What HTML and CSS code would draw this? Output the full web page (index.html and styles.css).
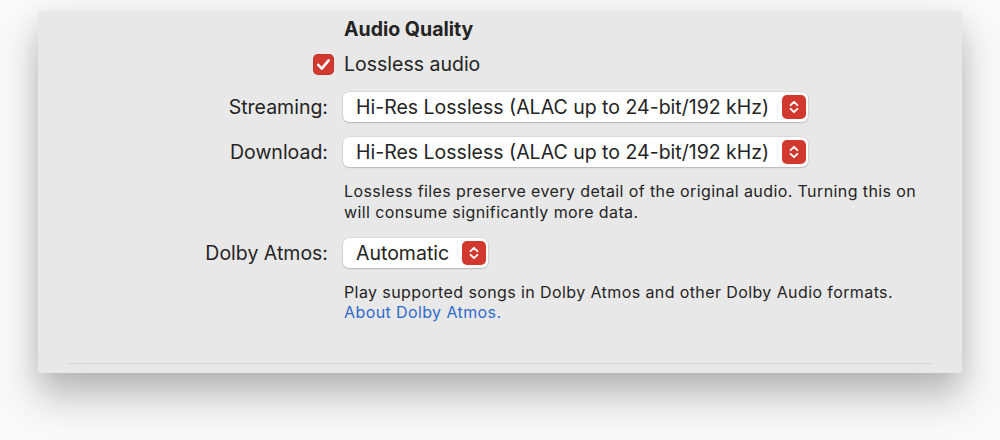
FILE: index.html
```html
<!DOCTYPE html>
<html lang="en">
<head>
<meta charset="utf-8">
<title>Audio Quality</title>
<link rel="stylesheet" href="styles.css">
</head>
<body>
<div class="window">
  <div class="form">
    <div class="cell"></div>
    <div class="heading">Audio Quality</div>

    <div class="cell check-cell">
      <span class="checkbox">
        <svg width="21" height="21" viewBox="0 0 21 21"><path d="M5.2 10.8 L8.8 14.6 L15.6 6.4" fill="none" stroke="#fff" stroke-width="2.6" stroke-linecap="round" stroke-linejoin="round"/></svg>
      </span>
    </div>
    <div class="check-label">Lossless audio</div>

    <div class="label row-stream">Streaming:</div>
    <div class="popup row-stream"><span class="popup-text">Hi-Res Lossless (ALAC up to 24-bit/192 kHz)</span><span class="stepper"><svg width="24" height="24" viewBox="0 0 24 24"><path d="M8.6 10.2 L12 6.8 L15.4 10.2 M8.6 13.8 L12 17.2 L15.4 13.8" fill="none" stroke="#fff" stroke-width="1.9" stroke-linecap="round" stroke-linejoin="round"/></svg></span></div>

    <div class="label row-download">Download:</div>
    <div class="popup row-download"><span class="popup-text">Hi-Res Lossless (ALAC up to 24-bit/192 kHz)</span><span class="stepper"><svg width="24" height="24" viewBox="0 0 24 24"><path d="M8.6 10.2 L12 6.8 L15.4 10.2 M8.6 13.8 L12 17.2 L15.4 13.8" fill="none" stroke="#fff" stroke-width="1.9" stroke-linecap="round" stroke-linejoin="round"/></svg></span></div>

    <div class="cell"></div>
    <p class="note note-lossless">Lossless files preserve every detail of the original audio. Turning this on will consume significantly more data.</p>

    <div class="label row-dolby">Dolby Atmos:</div>
    <div class="popup row-dolby"><span class="popup-text">Automatic</span><span class="stepper"><svg width="24" height="24" viewBox="0 0 24 24"><path d="M8.6 10.2 L12 6.8 L15.4 10.2 M8.6 13.8 L12 17.2 L15.4 13.8" fill="none" stroke="#fff" stroke-width="1.9" stroke-linecap="round" stroke-linejoin="round"/></svg></span></div>

    <div class="cell"></div>
    <p class="note note-dolby">Play supported songs in Dolby Atmos and other Dolby Audio formats.<br><a class="link" href="#">About Dolby Atmos.</a></p>
  </div>
  <div class="separator"></div>
</div>
</body>
</html>
```
FILE: styles.css
```css
html, body {
  margin: 0;
  padding: 0;
}
body {
  width: 1000px;
  height: 440px;
  background: #f9f9f9;
  font-family: "Inter", "Liberation Sans", sans-serif;
  color: #242424;
  overflow: hidden;
}
.window {
  margin: 11px 0 0 38px;
  width: 924px;
  height: 362px;
  box-sizing: border-box;
  padding: 6px 30px 9px 30px;
  background: #e8e8e8;
  box-shadow: 0 24px 36px rgba(0, 0, 0, 0.24), 0 4px 24px rgba(0, 0, 0, 0.08);
  display: flex;
  flex-direction: column;
}
.form {
  display: grid;
  grid-template-columns: 266px 1fr;
  column-gap: 9px;
  align-items: center;
  flex: 1;
  align-content: start;
}
.heading {
  font-weight: 700;
  font-size: 19.5px;
  line-height: 24px;
  padding-left: 1px;
}
.check-cell {
  display: flex;
  justify-content: flex-end;
  margin-top: 11px;
  height: 24px;
  align-items: center;
}
.checkbox {
  width: 21px;
  height: 21px;
  border-radius: 5px;
  background: #d2392e;
  display: flex;
  box-shadow: inset 0 0 0 0.5px rgba(0, 0, 0, 0.15);
}
.check-label {
  margin-top: 11px;
  font-size: 19.5px;
  line-height: 24px;
  padding-left: 1px;
}
.label {
  font-size: 19.5px;
  text-align: right;
  padding-right: 6px;
}
.row-stream { margin-top: 16px; }
.row-download { margin-top: 15px; }
.row-dolby { margin-top: 15px; }
.popup {
  justify-self: start;
  height: 30px;
  box-sizing: border-box;
  display: flex;
  align-items: center;
  padding: 0 2px 0 13px;
  background: #ffffff;
  border-radius: 6px;
  box-shadow: 0 0 0 0.5px rgba(0, 0, 0, 0.12), 0 1px 1.5px rgba(0, 0, 0, 0.16);
}
.popup-text {
  font-size: 19.5px;
  line-height: 24px;
  margin-right: 13px;
}
.stepper {
  width: 24px;
  height: 24px;
  border-radius: 5px;
  background: #d2392e;
  display: flex;
}
.note {
  margin: 0;
  max-width: 580px;
  font-size: 16px;
  letter-spacing: 0.4px;
  line-height: 21px;
  padding-left: 1px;
}
.note-lossless { margin-top: 14px; }
.note-dolby {
  margin-top: 14px;
  line-height: 20px;
}
.link {
  color: #2f6bcd;
  text-decoration: none;
}
.separator {
  height: 1px;
  background: #d3d3d3;
}
```
